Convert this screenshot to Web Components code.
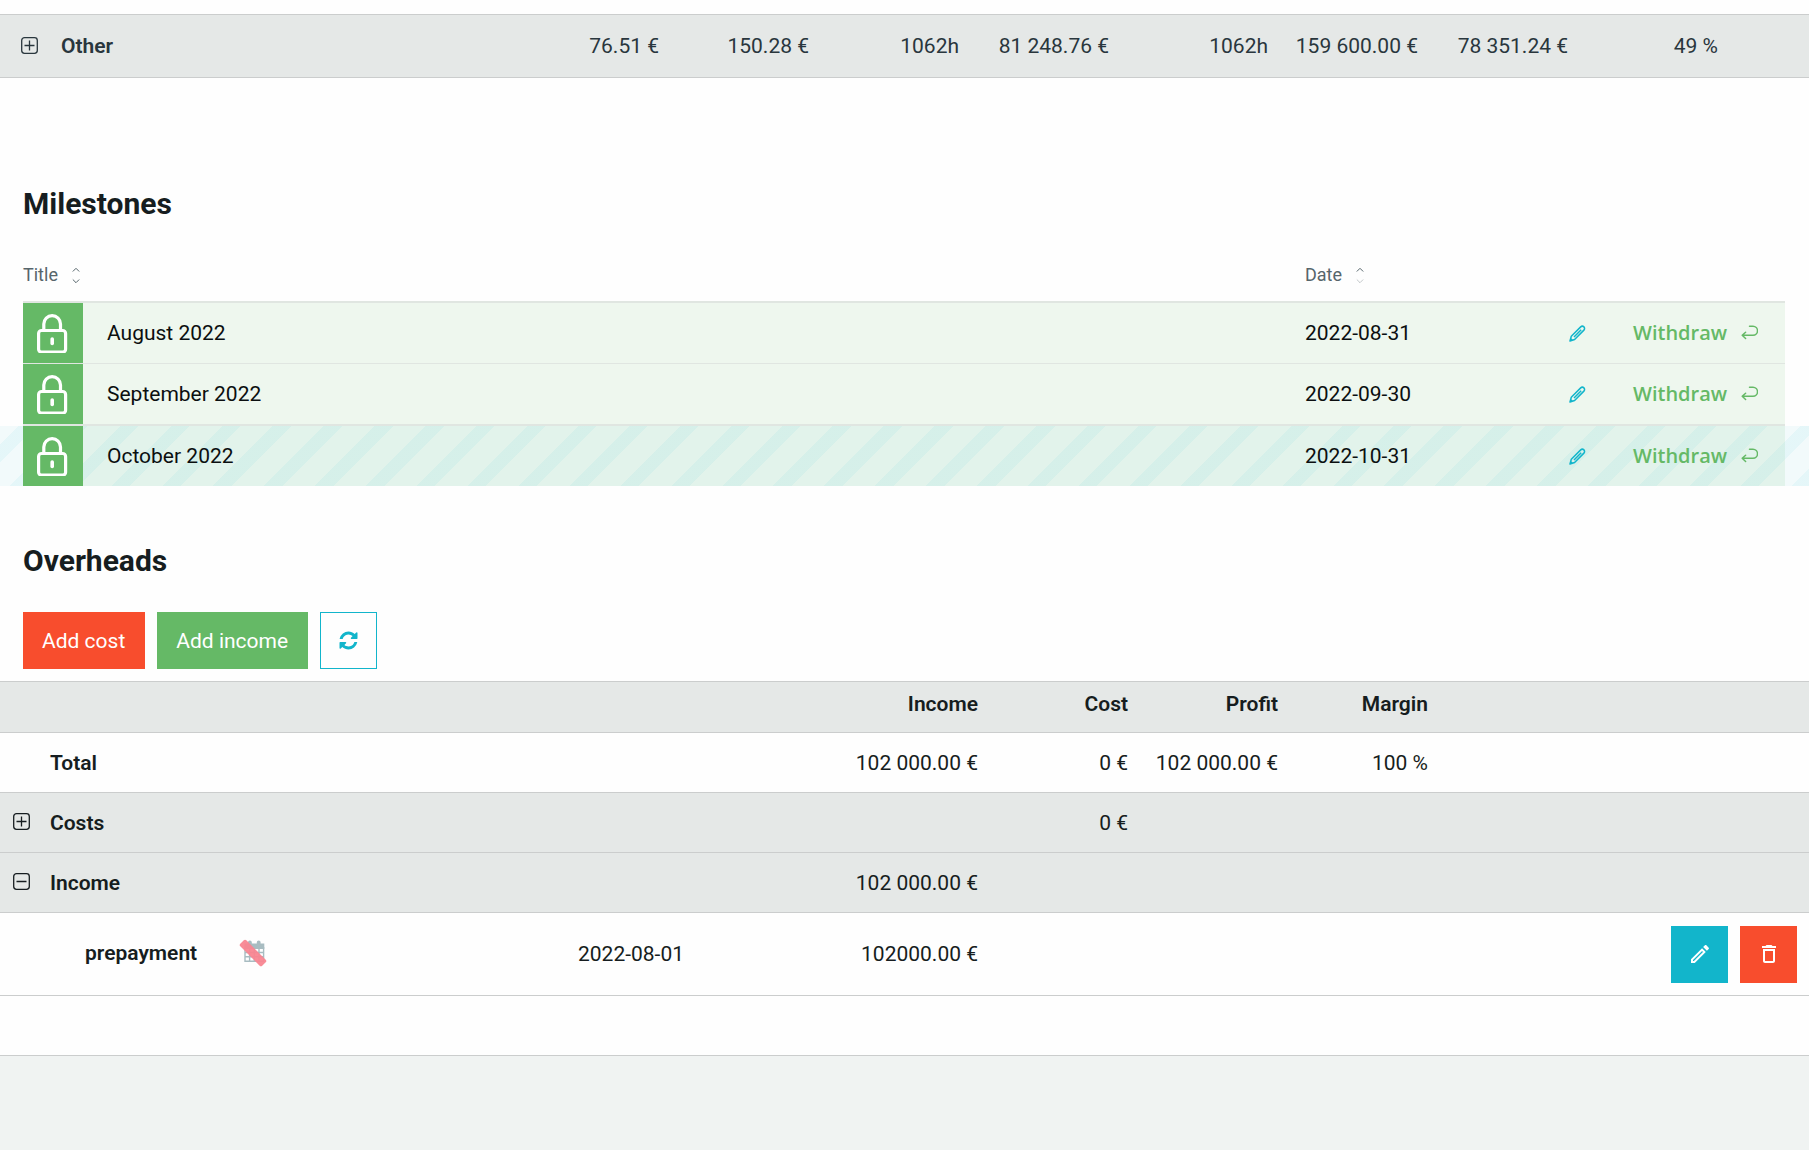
<!DOCTYPE html>
<html lang="en">
<head>
<meta charset="utf-8">
<meta name="viewport" content="width=device-width, initial-scale=1">
<title>Project budget</title>
<style>
  :root {
    --color-text: #161d20;
    --color-muted: #56656b;
    --color-grey: #e5e8e7;
    --color-line: #cbcdcd;
    --color-blue: #12b5cb;
    --color-green: #65b966;
    --color-red: #f84d2d;
    --color-white: #fefefe;
  }

  body {
    margin: 0;
    background: #f0f3f2;
    color: var(--color-text);
    font: 21px/28px Roboto, "Liberation Sans", sans-serif;
  }
</style>
</head>
<body>

<budget-page>
  <work-summary></work-summary>
  <page-section heading="Milestones">
    <milestone-table></milestone-table>
  </page-section>
  <page-section heading="Overheads">
    <button-bar>
      <action-button kind="red">Add cost</action-button>
      <action-button kind="green">Add income</action-button>
      <action-button kind="outline" label="Refresh"><app-icon name="refresh"></app-icon></action-button>
    </button-bar>
  </page-section>
  <overhead-table></overhead-table>
</budget-page>

<script>
// name: [viewBox width, viewBox height, size in px or null, shapes]
const icons = {
  plus: [17, 17, null, '<path d="M3.5.7h10a2.8 2.8 0 0 1 2.8 2.8v10a2.8 2.8 0 0 1-2.8 2.8h-10a2.8 2.8 0 0 1-2.8-2.8v-10A2.8 2.8 0 0 1 3.5.7zM3.500 8.500h10M8.500 3.500v10" fill="none" stroke="currentColor" stroke-width="1.300"/>'],
  minus: [17, 17, null, '<path d="M3.5.7h10a2.8 2.8 0 0 1 2.8 2.8v10a2.8 2.8 0 0 1-2.8 2.8h-10a2.8 2.8 0 0 1-2.8-2.8v-10A2.8 2.8 0 0 1 3.5.7zM3.500 8.500h10" fill="none" stroke="currentColor" stroke-width="1.300"/>'],
  lock: [40, 40, null, '<g fill="none" stroke="currentColor" stroke-width="3.200"><rect x="5.600" y="17.500" width="27" height="21.700" rx="3"/><path d="M10.800 17.500v-6.500a8.300 8.300 0 0 1 16.700 0v6.500"/><path d="M19.200 26v4.500" stroke-linecap="round" stroke-width="3.600"/></g>'],
  pen: [17, 17, null, '<path d="M1 16l1.300-4.700L11.700 1.900a2.100 2.100 0 0 1 3.200 3.200L5.600 14.500zM5 12l7.200-7.200M1.300 15.800l1.800-1.900" fill="none" stroke="currentColor" stroke-width="1.500" stroke-linejoin="round"/>'],
  back: [17, 17, null, '<path d="M8.500 1.300h3.500a4.200 4.200 0 0 1 0 9H1.200M4.600 7.300L1.200 10.300 4.600 13.500" fill="none" stroke="currentColor" stroke-width="1.500" stroke-linecap="round" stroke-linejoin="round"/>'],
  sort: [8, 17, null, '<path d="M.8 4.500L4 1.300l3.200 3.200M.8 12.500L4 15.700l3.200-3.200" fill="none" stroke="currentColor" stroke-width="1"/>'],
  sortUp: [8, 17, null, '<path d="M.8 4.500L4 1.300l3.200 3.200" fill="none" stroke="currentColor"/><path d="M.8 12.500L4 15.700l3.200-3.200" fill="none" stroke="currentColor" opacity=".35"/>'],
  refresh: [1792, 1792, 21, '<path fill="currentColor" d="M1639 1056q0 5-1 7-64 268-268 434.500t-478 166.500q-146 0-282.500-55t-243.500-157l-129 129q-19 19-45 19t-45-19-19-45v-448q0-26 19-45t45-19h448q26 0 45 19t19 45-19 45l-137 137q71 66 161 102t187 36q134 0 250-65t186-179q11-17 53-117 8-23 30-23h192q13 0 22.500 9.500t9.500 22.500zm25-800v448q0 26-19 45t-45 19h-448q-26 0-45-19t-19-45 19-45l138-138q-148-137-349-137-134 0-250 65t-186 179q-11 17-53 117-8 23-30 23h-199q-13 0-22.500-9.500t-9.500-22.500v-7q65-268 270-434.500t480-166.500q146 0 284 55.500t245 156.500l130-129q19-19 45-19t45 19 19 45z"/>'],
  edit: [24, 24, null, '<path fill="currentColor" d="M14.060 9.020l.92.92L5.920 19H5v-.92l9.060-9.060M17.660 3c-.25 0-.51.1-.7.29l-1.830 1.830 3.750 3.750 1.830-1.830c.39-.39.39-1.020 0-1.410l-2.340-2.340c-.2-.2-.45-.29-.71-.29zm-3.600 3.190L3 17.250V21h3.750L17.810 9.940l-3.750-3.750z"/>'],
  trash: [24, 24, null, '<path fill="currentColor" d="M6 19c0 1.100.9 2 2 2h8c1.100 0 2-.9 2-2V7H6v12zM8 9h8v10H8V9zm7.500-5l-1-1h-5l-1 1H5v2h14V4h-3.500z"/>'],
  noDate: [28, 32, null, '<g fill="none" stroke="#a8bcc1" stroke-width="1.400"><path d="M6 10v14.300h18.600V10M6 15.500h18.600M6 19.800h18.600M10.600 10v14.300M15.300 10v14.300M20 10v14.300"/></g><path fill="#a8bcc1" d="M5.300 6.500h3.700v-1.200a1.900 1.900 0 0 1 3.800 0v1.200h5v-1.200a1.900 1.900 0 0 1 3.800 0v1.200h3.700v5.500H5.300z"/><rect x="-1.500" y="11.700" width="31" height="8.600" rx="1.800" transform="rotate(45 14 16)" fill="#f98590" fill-opacity=".94"/>']
};

class AppIcon extends HTMLElement {
  constructor() {
    super();
    const shadowRoot = this.attachShadow({ mode: 'open' });
    const [width, height, size, shapes] = icons[this.getAttribute('name')];

    shadowRoot.innerHTML = `
      <style>
        :host {
          display: inline-block;
          width: ${size || width}px;
          height: ${size || height}px;
        }

        svg {
          display: block;
          width: 100%;
          height: 100%;
        }
      </style>
      <svg viewBox="0 0 ${width} ${height}" aria-hidden="true">${shapes}</svg>
    `;
  }
}

class BudgetPage extends HTMLElement {
  constructor() {
    super();
    const shadowRoot = this.attachShadow({ mode: 'open' });

    shadowRoot.innerHTML = `
      <style>
        :host {
          display: block;
        }

        main {
          padding-top: 14px;
          background: var(--color-white);
        }
      </style>
      <main><slot></slot></main>
    `;
  }
}

// "Other" row of the work table
class WorkSummary extends HTMLElement {
  constructor() {
    super();
    const shadowRoot = this.attachShadow({ mode: 'open' });

    shadowRoot.innerHTML = `
      <style>
        :host {
          display: block;
          margin-bottom: 98px;
          color: #29363d;
        }

        table {
          width: 100%;
          table-layout: fixed;
          border-spacing: 0;
          border: solid var(--color-line);
          border-width: 1px 0;
          background: var(--color-grey);
        }

        th, td {
          height: 62px;
          padding: 0;
          text-align: right;
          white-space: nowrap;
        }

        th {
          font-weight: 600;
          text-align: left;
        }

        button {
          display: block;
          margin: 0 0 0 21px;
          padding: 0 0 2px;
          border: 0;
          background: none;
          color: inherit;
          font-size: 0;
          line-height: 0;
        }

        col { width: 150px; }
        .toggle { width: 61px; }
        .name { width: auto; }
        .wide { width: 159px; }
        .rest { width: 91px; }
      </style>

      <table>
        <colgroup>
          <col class="toggle"><col class="name"><col><col><col><col><col class="wide"><col><col><col><col class="rest">
        </colgroup>
        <tbody>
          <tr>
            <td><button aria-label="Expand Other"><app-icon name="plus"></app-icon></button></td>
            <th scope="row">Other</th>
            <td>76.51 €</td>
            <td>150.28 €</td>
            <td>1062h</td>
            <td>81 248.76 €</td>
            <td>1062h</td>
            <td>159 600.00 €</td>
            <td>78 351.24 €</td>
            <td>49 %</td>
            <td></td>
          </tr>
        </tbody>
      </table>
    `;
  }
}

class PageSection extends HTMLElement {
  constructor() {
    super();
    const shadowRoot = this.attachShadow({ mode: 'open' });

    shadowRoot.innerHTML = `
      <style>
        :host {
          display: block;
          padding: 8px 24px 12px 23px;
        }

        h2 {
          margin: 0 0 31px;
          font-size: 30px;
          font-weight: 700;
          line-height: 40px;
        }
      </style>
      <h2>${this.getAttribute('heading')}</h2>
      <slot></slot>
    `;
  }
}

class MilestoneTable extends HTMLElement {
  constructor() {
    super();
    const shadowRoot = this.attachShadow({ mode: 'open' });
    const rows = [
      ['August 2022', '2022-08-31'],
      ['September 2022', '2022-09-30'],
      ['October 2022', '2022-10-31']
    ];

    shadowRoot.innerHTML = `
      <style>
        :host {
          display: block;
          margin-bottom: 35px;
        }

        table {
          width: 100%;
          table-layout: fixed;
          border-spacing: 0;
        }

        th, td {
          padding: 0;
          text-align: left;
          white-space: nowrap;
        }

        thead th {
          height: 40px;
          padding-bottom: 6px;
          color: var(--color-muted);
          font-size: 18px;
          font-weight: 400;
        }

        thead button {
          display: flex;
          align-items: center;
          gap: 14px;
        }

        tbody tr {
          position: relative;
          z-index: 0;
          background: #eef7ee;
          color: #0b0f10;
        }

        tbody td {
          height: 60px;
          border-top: 2px solid #e0e6e1;
        }

        tbody tr:nth-child(2) td {
          border-top-width: 1px;
        }

        /* current month: striped band that runs past the table's edges */
        tbody tr:last-child .title::before {
          content: '';
          position: absolute;
          z-index: -1;
          inset: 2px -24px 0 -23px;
          background:
            repeating-linear-gradient(135deg, transparent 0 13px, rgba(18, 190, 210, .06) 13px 26px, transparent 26px 36px),
            rgba(18, 181, 204, .05);
        }

        .lock {
          background: var(--color-green);
          background-clip: padding-box;
          color: #fff;
        }

        .lock app-icon {
          display: block;
          margin: 0 auto;
        }

        .title {
          padding-left: 24px;
        }

        button {
          padding: 0;
          border: 0;
          background: none;
          color: inherit;
          font: inherit;
        }

        .edit {
          display: block;
          color: var(--color-blue);
          line-height: 0;
        }

        .withdraw {
          display: flex;
          align-items: center;
          gap: 14px;
          color: var(--color-green);
          font: 600 20px/28px "Open Sans", "Noto Sans", sans-serif;
        }
      </style>

      <table>
        <colgroup>
          <col style="width: 60px"><col><col style="width: 264px"><col style="width: 64px"><col style="width: 152px">
        </colgroup>
        <thead>
          <tr>
            <th colspan="2"><button>Title <app-icon name="sort"></app-icon></button></th>
            <th><button>Date <app-icon name="sortUp"></app-icon></button></th>
            <th></th>
            <th></th>
          </tr>
        </thead>
        <tbody>
          ${rows.map(([title, date]) => `
            <tr>
              <td class="lock"><app-icon name="lock"></app-icon></td>
              <td class="title">${title}</td>
              <td>${date}</td>
              <td><button class="edit" aria-label="Edit ${title}"><app-icon name="pen"></app-icon></button></td>
              <td><button class="withdraw">Withdraw <app-icon name="back"></app-icon></button></td>
            </tr>
          `).join('')}
        </tbody>
      </table>
    `;
  }
}

class ButtonBar extends HTMLElement {
  constructor() {
    super();
    const shadowRoot = this.attachShadow({ mode: 'open' });

    shadowRoot.innerHTML = `
      <style>
        :host {
          display: flex;
          gap: 12px;
        }
      </style>
      <slot></slot>
    `;
  }
}

class ActionButton extends HTMLElement {
  constructor() {
    super();
    const shadowRoot = this.attachShadow({ mode: 'open' });
    const label = this.getAttribute('label');

    shadowRoot.innerHTML = `
      <style>
        :host {
          display: block;
        }

        button {
          display: flex;
          align-items: center;
          justify-content: center;
          min-width: 57px;
          height: 57px;
          padding: 0 19px 0 18px;
          border: 1px solid var(--button-color);
          background: var(--button-color);
          color: #fff;
          font: inherit;
          white-space: nowrap;
        }

        :host([label]) button { padding: 0; }
        :host([kind=red]) { --button-color: var(--color-red); }
        :host([kind=green]) { --button-color: var(--color-green); }
        :host([kind=blue]), :host([kind=outline]) { --button-color: var(--color-blue); }

        :host([kind=outline]) button {
          background: var(--color-white);
          color: var(--color-blue);
        }
      </style>
      <button ${label ? `aria-label="${label}"` : ''}><slot></slot></button>
    `;
  }
}

class OverheadTable extends HTMLElement {
  constructor() {
    super();
    const shadowRoot = this.attachShadow({ mode: 'open' });

    shadowRoot.innerHTML = `
      <style>
        :host {
          display: block;
        }

        table {
          width: 100%;
          table-layout: fixed;
          border-spacing: 0;
          border-bottom: 1px solid var(--color-line);
        }

        th, td {
          height: 59px;
          padding: 0;
          border-top: 1px solid var(--color-line);
          text-align: right;
          font-weight: 400;
          white-space: nowrap;
        }

        th {
          font-weight: 600;
        }

        thead th, thead td {
          height: 44px;
          padding-bottom: 6px;
        }

        tbody th {
          text-align: left;
        }

        thead, .group {
          background: var(--color-grey);
        }

        .item td, .item th {
          height: 82px;
        }

        .item td.date {
          text-align: left;
        }

        .label {
          display: flex;
          align-items: center;
          gap: 42px;
          padding: 0 0 2px 35px;
        }

        .toggle {
          display: block;
          margin-left: 13px;
          padding: 0 0 2px;
          border: 0;
          background: none;
          color: inherit;
          font-size: 0;
          line-height: 0;
        }

        .actions {
          display: flex;
          justify-content: flex-end;
          gap: 12px;
          padding-right: 12px;
        }
      </style>

      <table>
        <colgroup>
          <col style="width: 50px"><col><col style="width: 250px"><col style="width: 150px"><col style="width: 150px"><col style="width: 150px"><col style="width: 150px"><col style="width: 381px">
        </colgroup>
        <thead>
          <tr>
            <td></td>
            <td></td>
            <td></td>
            <th scope="col">Income</th>
            <th scope="col">Cost</th>
            <th scope="col">Profit</th>
            <th scope="col">Margin</th>
            <td></td>
          </tr>
        </thead>
        <tbody>
          <tr>
            <td></td>
            <th scope="row">Total</th>
            <td></td>
            <td>102 000.00 €</td>
            <td>0 €</td>
            <td>102 000.00 €</td>
            <td>100 %</td>
            <td></td>
          </tr>
          <tr class="group">
            <td><button class="toggle" aria-label="Expand costs"><app-icon name="plus"></app-icon></button></td>
            <th scope="row">Costs</th>
            <td></td>
            <td></td>
            <td>0 €</td>
            <td></td>
            <td></td>
            <td></td>
          </tr>
          <tr class="group">
            <td><button class="toggle" aria-label="Collapse income"><app-icon name="minus"></app-icon></button></td>
            <th scope="row">Income</th>
            <td></td>
            <td>102 000.00 €</td>
            <td></td>
            <td></td>
            <td></td>
            <td></td>
          </tr>
          <tr class="item">
            <td></td>
            <th scope="row"><div class="label">prepayment <app-icon name="noDate"></app-icon></div></th>
            <td class="date">2022-08-01</td>
            <td>102000.00 €</td>
            <td></td>
            <td></td>
            <td></td>
            <td>
              <div class="actions">
                <action-button kind="blue" label="Edit prepayment"><app-icon name="edit"></app-icon></action-button>
                <action-button kind="red" label="Delete prepayment"><app-icon name="trash"></app-icon></action-button>
              </div>
            </td>
          </tr>
          <tr>
            <td colspan="8"></td>
          </tr>
        </tbody>
      </table>
    `;
  }
}

customElements.define('app-icon', AppIcon);
customElements.define('action-button', ActionButton);
customElements.define('button-bar', ButtonBar);
customElements.define('page-section', PageSection);
customElements.define('work-summary', WorkSummary);
customElements.define('milestone-table', MilestoneTable);
customElements.define('overhead-table', OverheadTable);
customElements.define('budget-page', BudgetPage);
</script>
</body>
</html>
